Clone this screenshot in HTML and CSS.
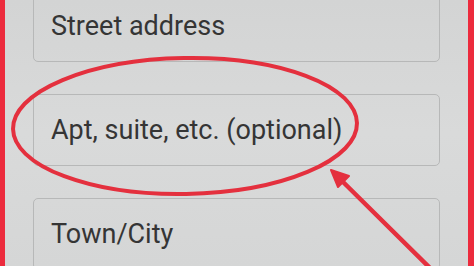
FILE: index.html
```html
<!DOCTYPE html>
<html>
<head>
<meta charset="utf-8">
<link rel="stylesheet" href="styles.css">
</head>
<body>
<div class="frame">
  <div class="fields">
    <div class="field first"><span class="label">Street address</span></div>
    <div class="field"><span class="label">Apt, suite, etc. (optional)</span></div>
    <div class="field"><span class="label">Town/City</span></div>
  </div>
  <svg class="annot" width="474" height="266" viewBox="0 0 474 266">
    <ellipse cx="185" cy="126" rx="172" ry="68" fill="none" stroke="#e4303e" stroke-width="4" transform="rotate(-1 185 126)"/>
    <line x1="432" y1="270" x2="338" y2="177" stroke="#e4303e" stroke-width="4.5" stroke-linecap="round"/>
    <path d="M331 170 L349 176 L338 187 Z" fill="#e4303e" stroke="#e4303e" stroke-width="2" stroke-linejoin="round"/>
  </svg>
</div>
</body>
</html>
```
FILE: styles.css
```css
html, body {
  margin: 0;
  padding: 0;
}
body {
  width: 474px;
  height: 266px;
  overflow: hidden;
  background: #d6d7d7;
  font-family: Roboto, "Noto Sans", sans-serif;
}
.frame {
  position: relative;
  box-sizing: border-box;
  width: 474px;
  height: 266px;
  border-left: 5px solid #ec2b3d;
  border-right: 6px solid #ec2b3d;
  background: linear-gradient(180deg, #d3d4d4 0%, #d9dada 50%, #d5d6d6 100%);
  overflow: hidden;
}
.fields {
  display: flex;
  flex-direction: column;
  gap: 32px;
  margin-top: -10px;
  padding-left: 28px;
}
.field {
  box-sizing: border-box;
  width: 407px;
  height: 72px;
  border: 1.5px solid #b7b8b8;
  border-radius: 5px;
  display: flex;
  align-items: center;
  padding-left: 17px;
}
.label {
  font-size: 27px;
  color: #353535;
  letter-spacing: 0;
}
.annot {
  position: absolute;
  left: -5px;
  top: 0;
}
```
